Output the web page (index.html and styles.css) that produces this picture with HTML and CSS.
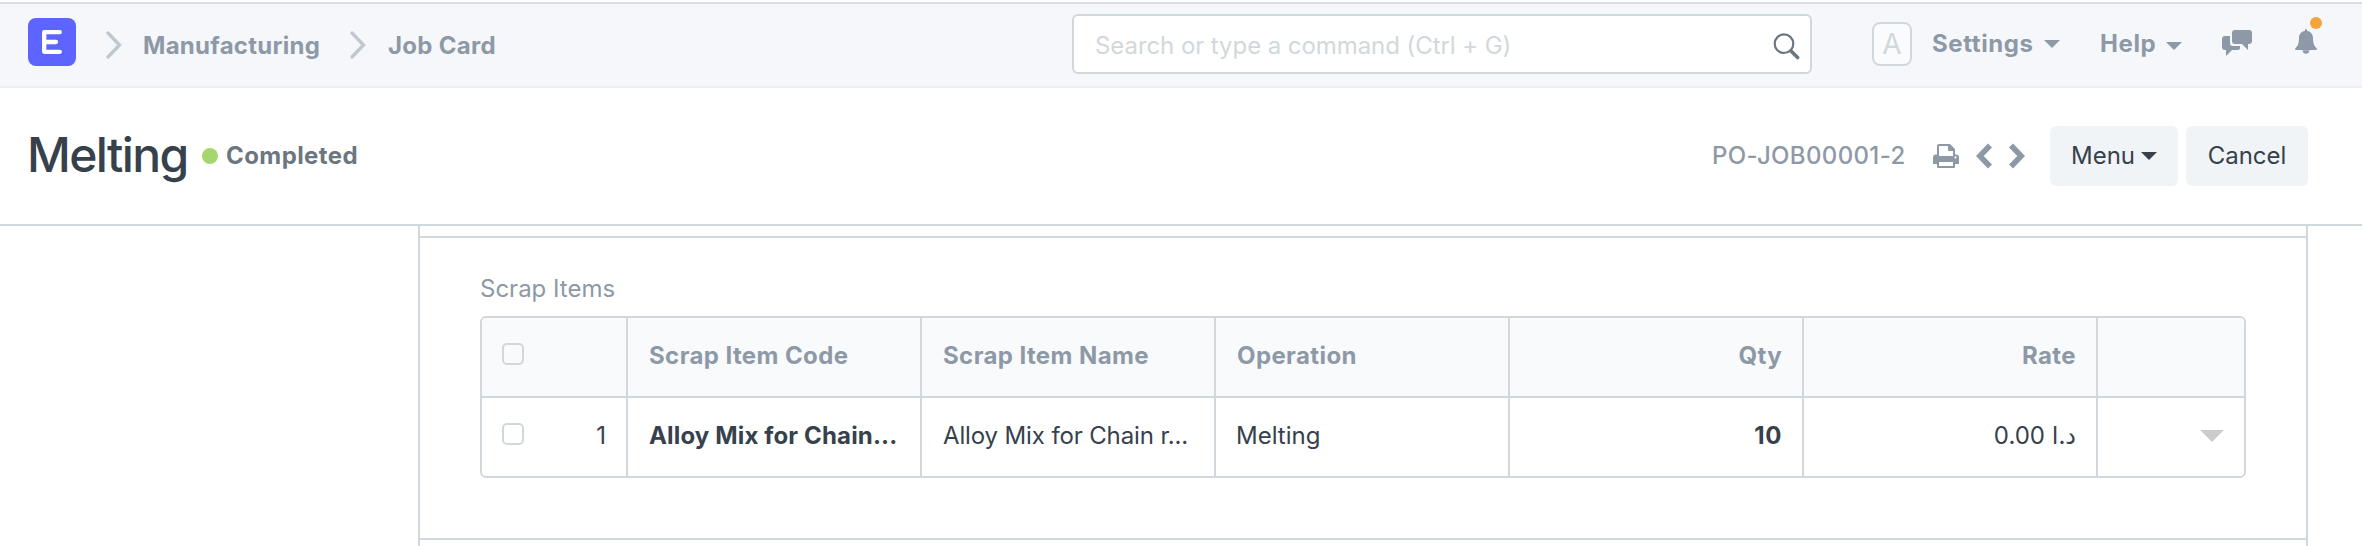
FILE: index.html
```html
<!DOCTYPE html>
<html lang="en">
<head>
<meta charset="utf-8">
<title>Melting - Job Card</title>
<link rel="stylesheet" href="styles.css">
</head>
<body>
<nav class="navbar">
  <div class="crumbs">
    <svg class="logo" viewBox="0 0 48 48"><rect width="48" height="48" rx="8" fill="#5e64ff"/><path d="M31.800 14.200H16.200V33.800H31.800M16.200 24H28" fill="none" stroke="#fff" stroke-width="4.300" stroke-linecap="round" stroke-linejoin="round"/></svg>
    <svg class="sep" viewBox="0 0 16 28"><path d="M2 2L13.500 14L2 26"/></svg>
    <a class="crumb manufacturing">Manufacturing</a>
    <svg class="sep" viewBox="0 0 16 28"><path d="M2 2L13.500 14L2 26"/></svg>
    <a class="crumb">Job Card</a>
  </div>
  <div class="search">
    <span class="placeholder">Search or type a command (Ctrl + G)</span>
    <svg class="search-icon" viewBox="0 0 27 27"><circle cx="11" cy="10.700" r="9.300" fill="none" stroke="#6c7680" stroke-width="2.200"/><path d="M18 18L24.600 24.600" stroke="#6c7680" stroke-width="3.600" stroke-linecap="round"/></svg>
  </div>
  <div class="tools">
    <span class="avatar">A</span>
    <span class="tool settings">Settings</span>
    <i class="caret settings-caret"></i>
    <span class="tool help">Help</span>
    <i class="caret help-caret"></i>
    <svg class="chat" viewBox="0 0 30 26"><path d="M13 0H27Q30 0 30 3V11Q30 14 27 14H26V20L20 14H13Q10 14 10 11V3Q10 0 13 0Z"/><path d="M3 6H8V13Q8 16 11 16H18V18Q18 20 15 20H10L4 26V20H3Q0 20 0 17V9Q0 6 3 6Z"/></svg>
    <span class="bell-wrap">
      <svg class="bell" viewBox="0 0 22 25"><path d="M11 0Q12.300 0 12.200 2C16 2.600 18 5.500 18 9C18 15 19.500 17.500 22 19.500Q22 21 20.500 21H1.500Q0 21 0 19.500C2.500 17.500 4 15 4 9C4 5.500 6 2.600 9.800 2Q9.700 0 11 0Z"/><path d="M7.500 21.200H14.500Q14 24.700 11 24.700Q8 24.700 7.500 21.200Z"/></svg>
      <i class="alert-dot"></i>
    </span>
  </div>
</nav>

<header class="page-head">
  <div class="title-area">
    <h1 class="title">Melting</h1>
    <i class="status-dot"></i>
    <span class="status">Completed</span>
  </div>
  <div class="actions">
    <span class="doc-name">PO-JOB00001-2</span>
    <svg class="print" viewBox="0 0 26 24"><path fill-rule="evenodd" d="M6 0H17L22 5V10.500H23Q26 10.500 26 13.500V19.500Q26 20 25.500 20H22V23Q22 24 21 24H5Q4 24 4 23V20H.5Q0 20 0 19.500V13.500Q0 10.500 3 10.500H4V2Q4 0 6 0ZM6 2V12H20V7H16Q15 7 15 6V2ZM6 18V22H20V18ZM22.500 12.300A1.100 1.100 0 1 0 22.500 14.500A1.100 1.100 0 1 0 22.500 12.300Z"/></svg>
    <svg class="arrow prev" viewBox="0 0 16 26"><path d="M14 2.500L3.800 13L14 23.500"/></svg>
    <svg class="arrow next" viewBox="0 0 16 26"><path d="M2 2.500L12.200 13L2 23.500"/></svg>
    <button class="btn menu">Menu<i class="caret"></i></button>
    <button class="btn cancel">Cancel</button>
  </div>
</header>

<main class="form">
  <section class="section">
    <div class="label">Scrap Items</div>
    <div class="grid">
      <div class="row head">
        <div class="cell check"><i class="box"></i></div>
        <div class="cell">Scrap Item Code</div>
        <div class="cell">Scrap Item Name</div>
        <div class="cell">Operation</div>
        <div class="cell num">Qty</div>
        <div class="cell num">Rate</div>
        <div class="cell"></div>
      </div>
      <div class="row">
        <div class="cell check"><i class="box"></i><span>1</span></div>
        <div class="cell bold">Alloy Mix for Chain...</div>
        <div class="cell tight">Alloy Mix for Chain r...</div>
        <div class="cell">Melting</div>
        <div class="cell num bold">10</div>
        <div class="cell num">د.ا 0.00</div>
        <div class="cell open"><i class="open-caret"></i></div>
      </div>
    </div>
  </section>
</main>
</body>
</html>
```
FILE: styles.css
```css
* { box-sizing: border-box; }
body {
  margin: 0;
  padding-top: 2px;
  height: 546px;
  overflow: hidden;
  background: #fff;
  color: #36414c;
  font: 400 24px/30px Inter, "DejaVu Sans", sans-serif;
  white-space: nowrap;
}
svg, i { display: block; flex: none; }

.navbar {
  display: grid;
  grid-template-columns: 1072px 740px 1fr;
  height: 86px;
  border-top: 2px solid #d9dce1;
  border-bottom: 2px solid #ebeff2;
  background: #f5f7fb;
  color: #8d99a6;
  font-weight: 700;
}
.crumbs { display: flex; align-items: flex-start; padding: 14px 0 0 28px; }
.logo { width: 48px; height: 48px; }
.sep {
  width: 16px;
  height: 28px;
  margin: 13px 21px 0 30px;
  fill: none;
  stroke: #c0c8cf;
  stroke-width: 3.4;
  stroke-linecap: round;
}
.crumb { margin-top: 13px; letter-spacing: 0.28px; }
.manufacturing { width: 177px; }
.crumb:last-child { margin-left: 1px; }
.search {
  display: flex;
  justify-content: space-between;
  height: 60px;
  margin-top: 10px;
  padding: 15px 10px 0 21px;
  border: 2px solid #d1d8dd;
  border-radius: 6px;
  background: #fff;
  color: #d1d8dd;
  font-weight: 400;
}
.placeholder { letter-spacing: -0.07px; }
.search-icon { width: 27px; height: 27px; margin-top: 2px; }
.tools { display: flex; align-items: flex-start; padding-left: 60px; }
.avatar {
  width: 40px;
  height: 44px;
  margin: 18px 20px 0 0;
  border: 2px solid #d1d8dd;
  border-radius: 8px;
  background: #fafbfc;
  color: #d1d8dd;
  font-size: 28px;
  font-weight: 400;
  line-height: 40px;
  text-align: center;
}
.tool { margin-top: 25px; letter-spacing: 0.6px; }
.settings { width: 112px; }
.help { width: 66px; margin-left: -1px; }
.caret {
  width: 16px;
  height: 8px;
  background: currentColor;
  clip-path: polygon(0 0, 100% 0, 50% 100%);
}
.settings-caret { margin: 36px 41px 0 0; }
.help-caret { margin: 38px 40px 0 0; }
.chat { width: 30px; height: 26px; margin: 26px 43px 0 0; fill: #8d99a6; }
.bell-wrap { position: relative; margin-top: 25px; }
.bell { width: 22px; height: 25px; fill: #8d99a6; }
.alert-dot {
  position: absolute;
  top: -12px;
  left: 15px;
  width: 12px;
  height: 12px;
  border-radius: 50%;
  background: #f5a33b;
}

.page-head {
  display: flex;
  justify-content: space-between;
  height: 138px;
  padding: 0 54px 0 27px;
  border-bottom: 2px solid #d1d8dd;
}
.title-area { display: flex; align-items: center; height: 136px; }
.title {
  width: 175px;
  margin: 0;
  padding-bottom: 3px;
  font-size: 48px;
  font-weight: 500;
  line-height: 60px;
  letter-spacing: -1.6px;
}
.status-dot { width: 16px; height: 16px; border-radius: 50%; background: #a7d66e; }
.status { margin-left: 8px; color: #6c7680; font-weight: 700; letter-spacing: 0.42px; }
.actions { display: flex; align-items: center; height: 136px; color: #8d99a6; }
.doc-name { width: 221px; font-weight: 500; letter-spacing: 0.36px; }
.print { width: 26px; height: 24px; fill: #8d99a6; }
.arrow { width: 16px; height: 26px; fill: none; stroke: #8d99a6; stroke-width: 5.6; }
.prev { margin: 0 17px; }
.next { margin-right: 25px; }
.btn {
  display: flex;
  align-items: center;
  justify-content: center;
  height: 60px;
  padding: 0;
  border: 0;
  border-radius: 6px;
  background: #f0f4f7;
  color: #36414c;
  font: inherit;
}
.menu { width: 128px; gap: 6px; margin-right: 8px; }
.cancel { width: 122px; }

.form {
  width: 1890px;
  height: 320px;
  margin-left: 418px;
  padding-top: 10px;
  border: solid #d1d8dd;
  border-width: 0 2px;
}
.section {
  height: 304px;
  padding: 36px 60px 0;
  border: solid #d1d8dd;
  border-width: 2px 0;
}
.label { height: 42px; color: #8d99a6; }
.grid { height: 162px; border: 2px solid #d1d8dd; border-radius: 6px; overflow: hidden; }
.row {
  display: grid;
  grid-template-columns: 146px repeat(5, 294px) 1fr;
  height: 78px;
}
.head {
  height: 80px;
  border-bottom: 2px solid #d1d8dd;
  background: #f9fafc;
  color: #8d99a6;
  font-weight: 700;
  letter-spacing: 0.4px;
}
.cell { height: 78px; padding: 23px 20px 0; border-right: 2px solid #d1d8dd; }
.head .cell, .bold, .tight { padding-left: 21px; }
.cell:last-child { border-right: 0; }
.check, .head .check { display: flex; justify-content: space-between; padding-left: 20px; }
.num { text-align: right; }
.bold { font-weight: 700; letter-spacing: 0.15px; }
.num.bold { letter-spacing: 0.6px; }
.tight { letter-spacing: -0.13px; }
.box { width: 22px; height: 22px; border: 2px solid #d1d8dd; border-radius: 5px; margin-top: 2px; }
.open { display: flex; justify-content: flex-end; }
.open-caret {
  width: 24px;
  height: 12px;
  margin-top: 9px;
  background: #ccc;
  clip-path: polygon(0 0, 100% 0, 50% 100%);
}
```
